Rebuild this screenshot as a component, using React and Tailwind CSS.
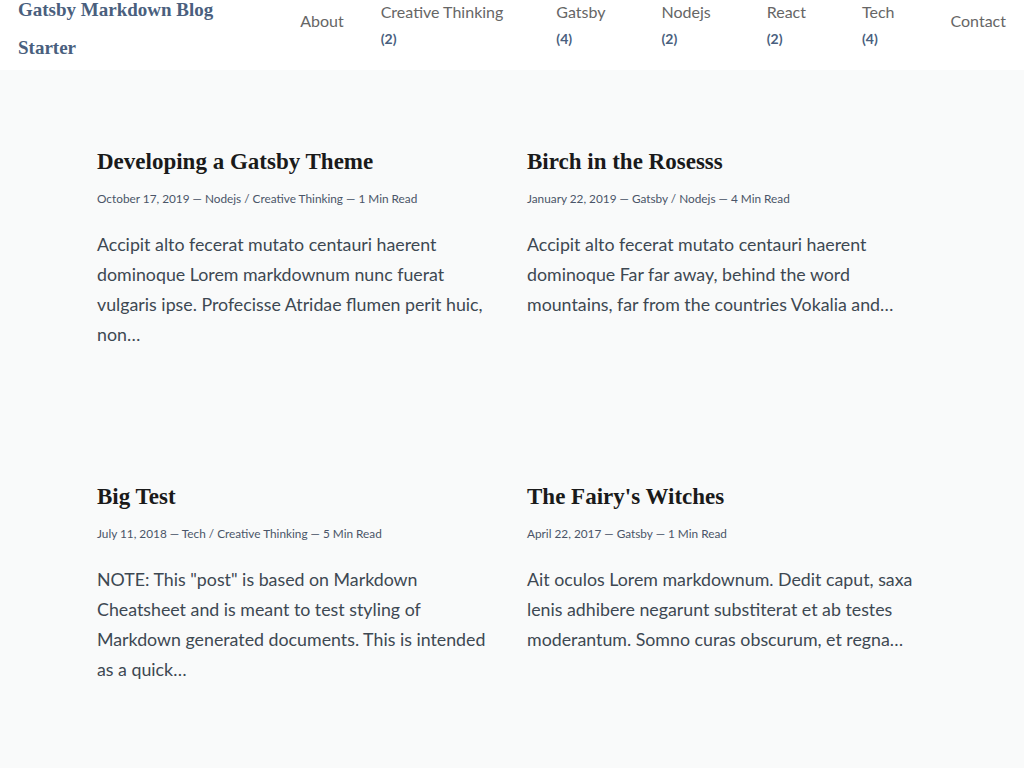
import React from 'react';

const navItems = [
  { label: 'About' },
  { label: 'Creative Thinking', count: 2 },
  { label: 'Gatsby', count: 4 },
  { label: 'Nodejs', count: 2 },
  { label: 'React', count: 2 },
  { label: 'Tech', count: 4 },
  { label: 'Contact' },
];

const posts = [
  {
    title: 'Developing a Gatsby Theme',
    meta: 'October 17, 2019 — Nodejs / Creative Thinking — 1 Min Read',
    excerpt: 'Accipit alto fecerat mutato centauri haerent dominoque Lorem markdownum nunc fuerat vulgaris ipse. Profecisse Atridae flumen perit huic, non…',
  },
  {
    title: 'Birch in the Rosesss',
    meta: 'January 22, 2019 — Gatsby / Nodejs — 4 Min Read',
    excerpt: 'Accipit alto fecerat mutato centauri haerent dominoque Far far away, behind the word mountains, far from the countries Vokalia and…',
  },
  {
    title: 'Big Test',
    meta: 'July 11, 2018 — Tech / Creative Thinking — 5 Min Read',
    excerpt: 'NOTE: This "post" is based on Markdown Cheatsheet and is meant to test styling of Markdown generated documents. This is intended as a quick…',
  },
  {
    title: "The Fairy's Witches",
    meta: 'April 22, 2017 — Gatsby — 1 Min Read',
    excerpt: 'Ait oculos Lorem markdownum. Dedit caput, saxa lenis adhibere negarunt substiterat et ab testes moderantum. Somno curas obscurum, et regna…',
  },
];

const serif = "font-['Liberation_Serif','Times_New_Roman',serif]";
const sans = "font-['Lato','Open_Sans',sans-serif]";

function NavItem({ item }) {
  if (item.count == null) {
    return (
      <a className="block mt-[9px] text-[16px] leading-6 text-[#666]">{item.label}</a>
    );
  }
  return (
    <a className="flex flex-col text-[16px] leading-6 text-[#666]">
      <span>{item.label}</span>
      <span className="text-[14px] leading-[30px] font-bold text-[#4a5f7e]">({item.count})</span>
    </a>
  );
}

export default function App() {
  return (
    <div className={`min-h-[768px] bg-[#f9fafa] ${sans}`}>
      <header className="h-[70px] bg-white flex items-start justify-between pl-[18px] pr-[18px] overflow-hidden">
        <div className={`-mt-[9px] w-[220px] text-[19px] leading-[38px] font-bold text-[#4a5f7e] ${serif}`}>
          Gatsby Markdown Blog<br />Starter
        </div>
        <nav className="flex items-start">
          <div className="mr-[37px]"><NavItem item={navItems[0]} /></div>
          <div className="mr-[53px]"><NavItem item={navItems[1]} /></div>
          <div className="mr-[56px]"><NavItem item={navItems[2]} /></div>
          <div className="mr-[56px]"><NavItem item={navItems[3]} /></div>
          <div className="mr-[56px]"><NavItem item={navItems[4]} /></div>
          <div className="mr-[56px]"><NavItem item={navItems[5]} /></div>
          <div><NavItem item={navItems[6]} /></div>
        </nav>
      </header>

      <main className="max-w-[830px] mx-auto pt-[77px] pb-16">
        <div className="grid grid-cols-2 gap-x-[30px] gap-y-[133px]">
          {posts.map((p) => (
            <article key={p.title}>
              <h2 className={`text-[23px] leading-[30px] font-bold text-[#1a1a1a] ${serif}`}>{p.title}</h2>
              <div className="mt-[13px] text-[11.8px] leading-[18px] text-[#4a5568]">{p.meta}</div>
              <p className="mt-[21px] text-[17.8px] leading-[30px] text-[#3d4852]">{p.excerpt}</p>
            </article>
          ))}
        </div>
      </main>
    </div>
  );
}
